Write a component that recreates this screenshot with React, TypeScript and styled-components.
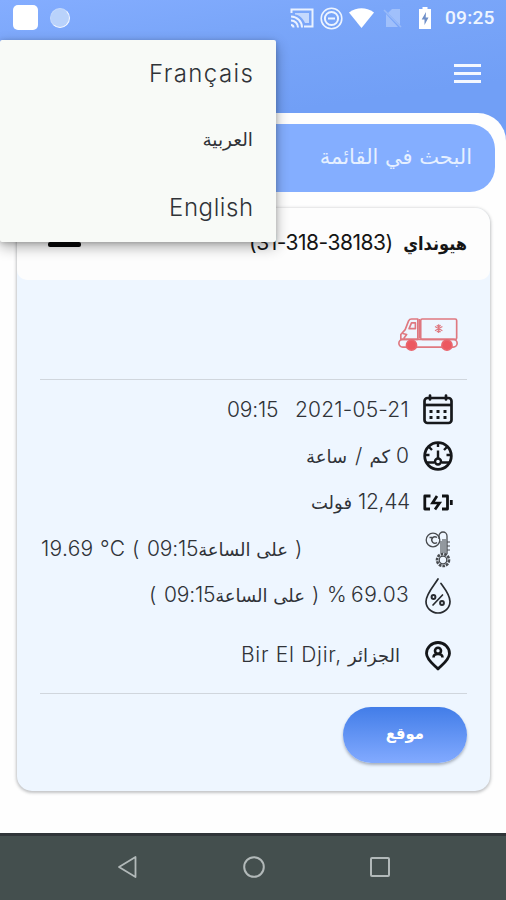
import React from "react";
import styled, { createGlobalStyle } from "styled-components";

const GlobalStyle = createGlobalStyle`
  * { box-sizing: border-box; }
  body { margin: 0; background: #fefefe; overflow: hidden; }
`;

const latin = `Inter, "Liberation Sans", sans-serif`;
const arabic = `"DejaVu Sans", "Noto Sans", sans-serif`;
const arabicCondensed = `"DejaVu Sans Condensed", "DejaVu Sans", sans-serif`;

const Screen = styled.div`
  position: relative;
  width: 506px;
  height: 900px;
  display: flex;
  flex-direction: column;
  overflow: hidden;
  background: linear-gradient(172deg, #84adff 0, #7aa6f9 60px, #719ff6 150px, #719ff6 100%);
`;

const StatusBar = styled.header`
  height: 36px;
  flex: none;
  display: flex;
  align-items: center;
  padding: 0 10px 0 13px;
`;

const AppSquare = styled.div`
  width: 25px;
  height: 25px;
  margin-top: -1px;
  border-radius: 5px;
  background: #fff;
`;

const Bubble = styled.div`
  width: 20px;
  height: 20px;
  margin: -1px 0 0 12px;
  border-radius: 50%;
  background: #b9d2fb;
  border: 1.5px solid #c4d9fc;
  border-right-color: #f4f8ff;
  border-bottom-color: #f4f8ff;
`;

const StatusIcons = styled.div`
  margin-left: auto;
  display: flex;
  align-items: center;
`;

const Clock = styled.span`
  width: 51px;
  margin-left: 14px;
  font: 500 19.2px/36px Roboto, sans-serif;
  letter-spacing: 0.2px;
  color: #eef5ff;
  white-space: nowrap;
`;

const AppBar = styled.div`
  height: 77px;
  flex: none;
  display: flex;
  justify-content: flex-end;
  align-items: flex-start;
  padding: 28px 25px 0 0;
`;

const Burger = styled.button`
  width: 27px;
  height: 19px;
  padding: 0;
  border: 0;
  background: none;
  display: flex;
  flex-direction: column;
  justify-content: space-between;
`;

const BurgerLine = styled.span`
  width: 27px;
  height: 3px;
  background: #f4f8ff;
`;

const Sheet = styled.main`
  flex: 1;
  padding: 11px 11px 0 17px;
  border-radius: 0 28px 0 0;
  background: #fefefe;
`;

const Search = styled.div`
  height: 68px;
  display: flex;
  align-items: center;
  justify-content: flex-end;
  padding-right: 23px;
  border-radius: 25px;
  background: #84aeff;
`;

const Card = styled.section`
  width: 473px;
  height: 583px;
  margin-top: 16px;
  border-radius: 15px;
  overflow: hidden;
  background: #eef6ff;
  box-shadow: 0 1px 3px 1px rgba(70, 75, 80, 0.32);
`;

const CardHeader = styled.div`
  height: 72px;
  display: flex;
  align-items: center;
  padding: 0 23px 0 31px;
  border-radius: 0 0 10px 10px;
  background: #fdfdfd;
`;

const Collapse = styled.div`
  width: 33px;
  height: 5px;
  margin-right: auto;
  border-radius: 2px;
  background: #090909;
`;

const CardBody = styled.div`
  padding: 0 23px;
`;

const Vehicle = styled.div`
  height: 99px;
  display: flex;
  justify-content: flex-end;
  padding: 38px 7px 0 0;
`;

const Divider = styled.div`
  height: 1px;
  background: #d0d6dd;
`;

const Details = styled.div`
  padding-top: 7px;
  height: 313px;
`;

const Row = styled.div<{ $h?: number }>`
  height: ${(p) => p.$h ?? 46.5}px;
  display: flex;
  align-items: center;
`;

const Line = styled.div<{ $width?: number; $inset?: number }>`
  flex: none;
  width: ${(p) => p.$width ?? 369}px;
  padding-right: ${(p) => p.$inset ?? 0}px;
  display: flex;
  align-items: baseline;
  justify-content: flex-end;
`;

const IconSlot = styled.div`
  width: 34px;
  margin: -1px 12px 0 auto;
  display: flex;
  justify-content: center;
`;

type PieceProps = {
  $w: number;
  $gap?: number;
  $size?: number;
  $track?: number;
  $weight?: number;
  $color?: string;
  $condensed?: boolean;
};

const Latin = styled.span<PieceProps>`
  flex: none;
  width: ${(p) => p.$w}px;
  margin-left: ${(p) => p.$gap ?? 0}px;
  font: ${(p) => p.$weight ?? 300} ${(p) => p.$size ?? 21}px/32px ${latin};
  letter-spacing: ${(p) => p.$track ?? 0}px;
  color: ${(p) => p.$color ?? "#303338"};
  white-space: pre;
`;

const Arabic = styled.span<PieceProps>`
  flex: none;
  width: ${(p) => p.$w}px;
  margin-left: ${(p) => p.$gap ?? 0}px;
  padding-bottom: 2px;
  font: ${(p) => p.$weight ?? 400} ${(p) => p.$size ?? 18}px/30px
    ${(p) => (p.$condensed ? arabicCondensed : arabic)};
  color: ${(p) => p.$color ?? "#303338"};
  direction: rtl;
  white-space: nowrap;
`;

const LocateButton = styled.button`
  width: 124px;
  height: 56px;
  margin: 13px 0 0 auto;
  padding: 0;
  display: flex;
  align-items: center;
  justify-content: center;
  border: 0;
  border-radius: 28px;
  background: linear-gradient(#427de8, #82aaff);
  box-shadow: 0 2px 3px rgba(60, 70, 90, 0.4);
`;

const NavBar = styled.nav`
  height: 67px;
  flex: none;
  display: flex;
  justify-content: space-between;
  align-items: center;
  padding: 0 114px 2px 115px;
  border-top: 3px solid #303539;
  background: #444f4e;
`;

const LanguageMenu = styled.div`
  position: absolute;
  left: 0;
  top: 40px;
  width: 276px;
  height: 202px;
  display: flex;
  flex-direction: column;
  border-radius: 2px;
  background: #f8faf7;
  box-shadow: 0 5px 14px rgba(0, 0, 0, 0.32), 0 1px 5px rgba(0, 0, 0, 0.18);
`;

const MenuItem = styled.div`
  height: 67.4px;
  display: flex;
  align-items: center;
  justify-content: flex-end;
  padding-right: 23px;
`;

const CastIcon = () => (
  <svg width="24" height="20" viewBox="0 0 24 20" fill="none" stroke="#eaf2ff" strokeWidth="2">
    <path d="M1.5 5V1.500h21v17H14" />
    <path d="M1 17a2.500 2.500 0 0 1 2.500 2.500M1 12.500a7 7 0 0 1 7 7M1 8.500a11 11 0 0 1 11 11" />
    <path d="M5 5h14v10h-4C13 10 9 7 5 6.500Z" fill="#c5d9fd" stroke="none" />
  </svg>
);

const DndIcon = () => (
  <svg width="23" height="23" viewBox="0 0 23 23" fill="none" stroke="#edf4ff">
    <circle cx="11.500" cy="11.500" r="10.300" strokeWidth="1.600" />
    <circle cx="11.500" cy="11.500" r="6.600" strokeWidth="2" />
    <path d="M8 11.500h7" strokeWidth="2" />
  </svg>
);

const WifiIcon = () => (
  <svg width="25" height="20" viewBox="0 0 25 20">
    <path d="M0 4.400Q12.500-4 25 4.400L12.500 20Z" fill="#fff" />
  </svg>
);

const NoSimIcon = () => (
  <svg width="20" height="20" viewBox="0 0 20 20">
    <path d="M9 1h8v16L5 5Z M3 6l12 13H3Z" fill="#a0c0fb" />
    <path d="M1 2l17 17" stroke="#98baf8" strokeWidth="1.600" />
  </svg>
);

const BatteryIcon = () => (
  <svg width="12" height="22" viewBox="0 0 12 22">
    <path d="M3.500 0h5v2H12v20H0V2h3.500Z" fill="#fff" />
    <path d="M7 5 2.700 12.500H5.500V18l4-7.500H6.700Z" fill="#6f8fc8" />
  </svg>
);

const TruckIcon = () => (
  <svg width="63" height="34" viewBox="0 0 63 35" fill="none" stroke="#df7880" strokeWidth="1.700" strokeLinejoin="round">
    <rect x="23.500" y="1" width="37" height="21" rx="1.500" />
    <path d="M20.500 1H14q-2 0-3 2L7.500 12 3 17v5h17.500ZM18 5h-4l-2.500 6H18ZM5 16l4 1-3 4" />
    <rect x="1" y="22" width="60" height="8" rx="4" />
    <path d="M22 1v20" />
    <path d="M42 6.500v9M38.200 8.800l7.600 4.400M45.800 8.800l-7.600 4.400M40 7.500l2 1.500 2-1.500M40 14.500l2-1.500 2 1.500" strokeWidth="1.200" />
    <circle cx="14" cy="28" r="5.200" fill="#ec5860" stroke="#e9666e" />
    <circle cx="50.500" cy="28" r="5.200" fill="#ec5860" stroke="#e9666e" />
  </svg>
);

const CalendarIcon = () => (
  <svg width="30" height="31" viewBox="0 0 30 31" fill="none" stroke="#17191c">
    <rect x="1.500" y="4" width="27" height="25" rx="3" strokeWidth="2.700" />
    <path d="M1.500 11h27" strokeWidth="2.700" />
    <path d="M7 1.500v4M23 1.500v4" strokeWidth="2.700" strokeLinecap="round" />
    <path d="M6.500 17.500h3M13.500 17.500h3M20.500 17.500h3M6.500 23.500h3M13.500 23.500h3M20.500 23.500h3" strokeWidth="2.800" />
  </svg>
);

const GaugeIcon = () => (
  <svg width="30" height="30" viewBox="0 0 30 30" fill="none" stroke="#15171a" strokeWidth="2.400">
    <circle cx="15" cy="15" r="13.300" strokeWidth="2.800" />
    <path d="M15 2v4M2 14h4.500M23.500 14H28M6 6l3 3M24 6l-3 3M3.500 21.500h8M18.500 21.500h8M15 9.500v8" />
    <circle cx="15" cy="20.500" r="3" />
  </svg>
);

const ChargeIcon = () => (
  <svg width="30" height="17" viewBox="0 0 30 17" fill="none" stroke="#101214" strokeWidth="2.800">
    <path d="M7.500 2H1.800v13H7M19 2h5.500v13H19" strokeLinejoin="round" />
    <path d="M14 2 9.500 9h7L12 15.500" strokeWidth="2.700" />
    <path d="M28.300 6v5" />
  </svg>
);

const ThermometerIcon = () => (
  <svg width="26" height="37" viewBox="0 0 26 37" fill="none" stroke="#484b4f" strokeWidth="1.300">
    <circle cx="8" cy="9" r="6.800" />
    <path d="M14 8V5a4 4 0 0 1 8 0v18" />
    <path d="M16 10v12M18 8v14M20 8v14" strokeWidth="1.100" />
    <path d="M22 11h3M22 15h3M22 19h3" strokeWidth="1" />
    <circle cx="18" cy="29" r="6" strokeWidth="2.600" strokeDasharray="2.600 1" />
    <circle cx="18" cy="29" r="3.800" />
    <path d="M12 6.500a3.200 3.200 0 1 0 0 5M4.500 6.500h3" strokeWidth="1.400" />
  </svg>
);

const HumidityIcon = () => (
  <svg width="26" height="36" viewBox="0 0 26 36" fill="none" stroke="#282b2f" strokeWidth="1.700" strokeLinecap="round">
    <path d="M13 1C9 7.500 1 16 1 23.500a12 11.500 0 0 0 24 0C25 17 20 11 16 5.500" />
    <circle cx="8.500" cy="19" r="1.900" strokeWidth="2" />
    <circle cx="17" cy="25" r="1.900" strokeWidth="2" />
    <path d="m8 27 9.500-10" />
  </svg>
);

const PinIcon = () => (
  <svg width="26" height="30" viewBox="0 0 26 30" fill="none" stroke="#141619" strokeLinejoin="round">
    <path d="M13 28C8.500 23.500 1.500 18.500 1.500 12.500a11.500 11 0 0 1 23 0C24.500 18.500 17.500 23.500 13 28Z" strokeWidth="2.800" />
    <circle cx="13" cy="9.800" r="3" strokeWidth="2.600" />
    <path d="M8.500 16.500q0-3.500 4.500-3.500t4.500 3.500" strokeWidth="2.600" />
  </svg>
);

const BackIcon = () => (
  <svg width="24" height="24" viewBox="0 0 24 24" fill="none" stroke="#b2b9b9" strokeWidth="1.800">
    <path d="M20.500 2v20L4 12Z" strokeLinejoin="round" />
  </svg>
);

const HomeIcon = () => (
  <svg width="24" height="24" viewBox="0 0 24 24" fill="none" stroke="#b2b9b9" strokeWidth="2">
    <circle cx="12" cy="12" r="9.800" />
  </svg>
);

const RecentsIcon = () => (
  <svg width="24" height="24" viewBox="0 0 24 24" fill="none" stroke="#b2b9b9" strokeWidth="2">
    <rect x="3" y="3" width="18" height="18" rx="1" />
  </svg>
);

const Gap = styled.div<{ $w: number }>`
  flex: none;
  width: ${(p) => p.$w}px;
`;

export default function App() {
  return (
    <Screen>
      <GlobalStyle />
      <StatusBar>
        <AppSquare />
        <Bubble />
        <StatusIcons>
          <CastIcon />
          <Gap $w={6} />
          <DndIcon />
          <Gap $w={6} />
          <WifiIcon />
          <Gap $w={9} />
          <NoSimIcon />
          <Gap $w={16} />
          <BatteryIcon />
          <Clock>09:25</Clock>
        </StatusIcons>
      </StatusBar>
      <AppBar>
        <Burger aria-label="القائمة">
          <BurgerLine />
          <BurgerLine />
          <BurgerLine />
        </Burger>
      </AppBar>

      <Sheet>
        <Search>
          <Arabic $w={152} $size={21} $color="#e6f0ff">البحث في القائمة</Arabic>
        </Search>
        <Card>
          <CardHeader>
            <Collapse />
            <Line $width={218}>
              <Latin $w={144} $size={21} $track={-0.5} $weight={400} $color="#151515">(31-318-38183)</Latin>
              <Arabic $w={64} $gap={10} $weight={700} $size={18} $condensed $color="#151515">هيونداي</Arabic>
            </Line>
          </CardHeader>
          <CardBody>
            <Vehicle><TruckIcon /></Vehicle>
            <Divider />
            <Details>
              <Row>
                <Line>
                  <Latin $w={51} $track={-0.2}>09:15</Latin>
                  <Latin $w={114} $gap={17} $track={0.2}>2021-05-21</Latin>
                </Line>
                <IconSlot><CalendarIcon /></IconSlot>
              </Row>
              <Row>
                <Line>
                  <Arabic $w={41}>ساعة</Arabic>
                  <Latin $w={7} $gap={8}>/</Latin>
                  <Arabic $w={20} $gap={8}>كم</Arabic>
                  <Latin $w={13} $gap={6}>0</Latin>
                </Line>
                <IconSlot><GaugeIcon /></IconSlot>
              </Row>
              <Row>
                <Line>
                  <Arabic $w={42}>فولت</Arabic>
                  <Latin $w={51} $gap={6} $track={-0.3}>12,44</Latin>
                </Line>
                <IconSlot><ChargeIcon /></IconSlot>
              </Row>
              <Row>
                <Line $width={263}>
                  <Latin $w={53} $track={0.3}>19.69</Latin>
                  <Latin $w={27} $gap={6} $track={0.5}>°C</Latin>
                  <Latin $w={8} $gap={5}>(</Latin>
                  <Latin $w={51} $gap={7} $track={-0.2}>09:15</Latin>
                  <Arabic $w={89} $gap={1}>على الساعة</Arabic>
                  <Latin $w={8} $gap={7}>)</Latin>
                </Line>
                <IconSlot><ThermometerIcon /></IconSlot>
              </Row>
              <Row>
                <Line>
                  <Latin $w={8}>(</Latin>
                  <Latin $w={51} $gap={7} $track={-0.2}>09:15</Latin>
                  <Arabic $w={89} $gap={1}>على الساعة</Arabic>
                  <Latin $w={8} $gap={7}>)</Latin>
                  <Latin $w={18} $gap={7}>%</Latin>
                  <Latin $w={58} $gap={6} $track={0.5}>69.03</Latin>
                </Line>
                <IconSlot><HumidityIcon /></IconSlot>
              </Row>
              <Row $h={73}>
                <Line $inset={9}>
                  <Latin $w={100} $track={0.7}>Bir El Djir,</Latin>
                  <Arabic $w={53} $gap={6}>الجزائر</Arabic>
                </Line>
                <IconSlot><PinIcon /></IconSlot>
              </Row>
            </Details>
            <Divider />
            <LocateButton>
              <Arabic $w={38} $size={16.5} $weight={700} $condensed $color="#fff">موقع</Arabic>
            </LocateButton>
          </CardBody>
        </Card>
      </Sheet>

      <NavBar>
        <BackIcon />
        <HomeIcon />
        <RecentsIcon />
      </NavBar>

      <LanguageMenu>
        <MenuItem><Latin $w={104} $size={24} $track={1.4}>Français</Latin></MenuItem>
        <MenuItem><Arabic $w={51} $size={18.5}>العربية</Arabic></MenuItem>
        <MenuItem><Latin $w={84} $size={24} $track={0.6}>English</Latin></MenuItem>
      </LanguageMenu>
    </Screen>
  );
}
